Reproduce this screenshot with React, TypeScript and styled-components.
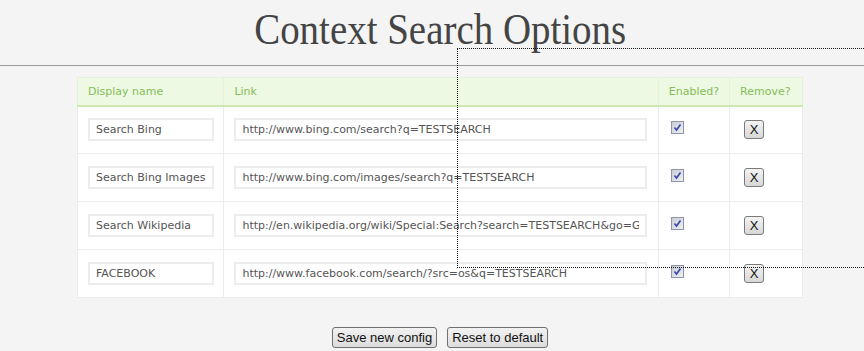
import React from 'react'
import styled, { createGlobalStyle } from 'styled-components'

const engines = [
  { name: 'Search Bing', link: 'http://www.bing.com/search?q=TESTSEARCH' },
  { name: 'Search Bing Images', link: 'http://www.bing.com/images/search?q=TESTSEARCH' },
  { name: 'Search Wikipedia', link: 'http://en.wikipedia.org/wiki/Special:Search?search=TESTSEARCH&go=Go' },
  { name: 'FACEBOOK', link: 'http://www.facebook.com/search/?src=os&q=TESTSEARCH' },
]

const GlobalStyle = createGlobalStyle`
  html, body {
    margin: 0;
    background: #f4f4f4;
    overflow: hidden;
  }
`

const Page = styled.div`
  position: relative;
  height: 351px;
`

const Header = styled.header`
  height: 66px;
  box-sizing: border-box;
  border-bottom: 1px solid #9a9a9a;
  padding-left: 16px;
  text-align: center;
`

const Title = styled.h1`
  display: inline-block;
  margin: 0;
  padding-top: 2px;
  font-family: 'Liberation Serif', serif;
  font-weight: normal;
  font-size: 44px;
  line-height: 56px;
  color: #444;
  transform: scaleX(0.885);
`

const Content = styled.main`
  padding-left: 16px;
  display: flex;
  flex-direction: column;
  align-items: center;
`

const Table = styled.table`
  margin-top: 11px;
  width: 726px;
  border-collapse: collapse;
  background: #fff;
  font-family: 'DejaVu Sans', Verdana, sans-serif;
  font-size: 11px;
`

const HeadCell = styled.th<{ $w: number }>`
  width: ${p => p.$w}px;
  height: 28px;
  padding: 0 10px;
  box-sizing: border-box;
  text-align: left;
  font-weight: normal;
  color: #86bd57;
  background: #edf9e3;
  border: 1px solid #e4f3d6;
  border-bottom: 2px solid #cdebb0;
`

const Cell = styled.td`
  height: 48px;
  padding: 0 0 0 10px;
  box-sizing: border-box;
  border: 1px solid #ececec;
  vertical-align: middle;
`

const TextInput = styled.input<{ $w: number }>`
  width: ${p => p.$w}px;
  height: 23px;
  box-sizing: border-box;
  margin: 0;
  padding: 0 6px;
  border: 2px solid #ececec;
  font-family: 'DejaVu Sans', Verdana, sans-serif;
  font-size: 11px;
  color: #555;
  background: #fff;
  outline: none;
`

const Check = styled.span`
  display: block;
  width: 13px;
  height: 13px;
  margin: -4px 0 0 2px;
  box-sizing: border-box;
  border: 1px solid #8b96ad;
  background: linear-gradient(135deg, #c9ccd6, #eef0f4);
  svg {
    display: block;
  }
`

const XButton = styled.button`
  display: block;
  width: 20px;
  height: 19px;
  margin: -1px 0 0 4px;
  padding: 0;
  border: 1px solid #7b7b7b;
  border-radius: 3px;
  background: linear-gradient(#f4f4f4, #d7d7d7);
  font-family: 'Liberation Sans', Arial, sans-serif;
  font-size: 13px;
  line-height: 17px;
  color: #111;
`

const Actions = styled.div`
  margin-top: 29px;
  display: flex;
  gap: 10px;
`

const Button = styled.button`
  height: 21px;
  padding: 0 4px;
  border: 1px solid #707070;
  border-radius: 3px;
  background: linear-gradient(#f2f2f2, #dcdcdc);
  font-family: 'Liberation Sans', Arial, sans-serif;
  font-size: 13px;
  color: #111;
`

const FocusRing = styled.div`
  position: absolute;
  left: 457px;
  top: 48px;
  right: -10px;
  height: 218px;
  border: 1px dotted #111;
  pointer-events: none;
`

const Checkbox = () => (
  <Check>
    <svg width="11" height="11" viewBox="0 0 11 11">
      <path d="M2.5 5.5 L4.5 8 L8.5 2.5" fill="none" stroke="#3b4fa8" strokeWidth="1.7" />
    </svg>
  </Check>
)

export default function App() {
  return (
    <Page>
      <GlobalStyle />
      <Header>
        <Title>Context Search Options</Title>
      </Header>
      <Content>
        <Table>
          <thead>
            <tr>
              <HeadCell $w={147}>Display name</HeadCell>
              <HeadCell $w={435}>Link</HeadCell>
              <HeadCell $w={71}>Enabled?</HeadCell>
              <HeadCell $w={73}>Remove?</HeadCell>
            </tr>
          </thead>
          <tbody>
            {engines.map(e => (
              <tr key={e.name}>
                <Cell>
                  <TextInput $w={126} defaultValue={e.name} />
                </Cell>
                <Cell>
                  <TextInput $w={413} defaultValue={e.link} />
                </Cell>
                <Cell>
                  <Checkbox />
                </Cell>
                <Cell>
                  <XButton>X</XButton>
                </Cell>
              </tr>
            ))}
          </tbody>
        </Table>
        <Actions>
          <Button>Save new config</Button>
          <Button>Reset to default</Button>
        </Actions>
      </Content>
      <FocusRing />
    </Page>
  )
}
